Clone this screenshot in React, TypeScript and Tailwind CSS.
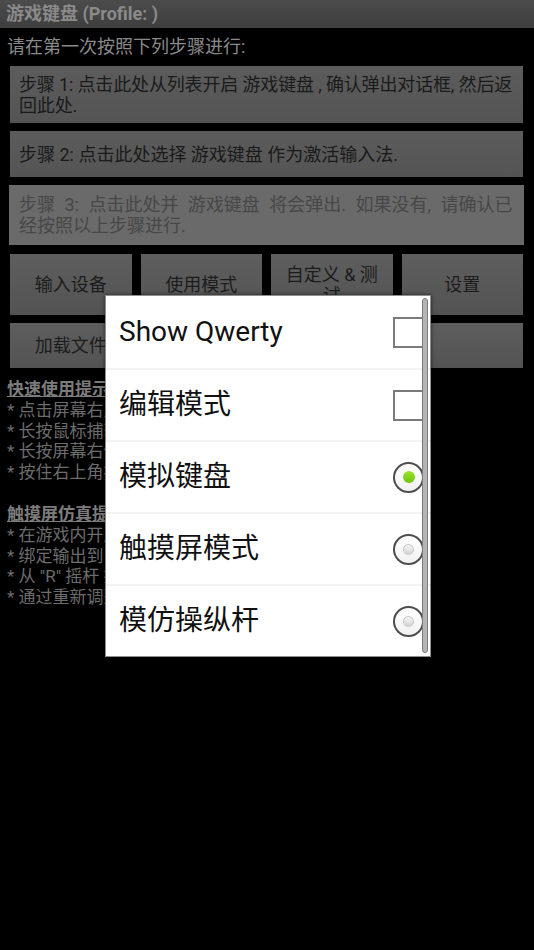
const steps = [
  {
    lines: ["步骤 1: 点击此处从列表开启 游戏键盘 , 确认弹出对话框, 然后返", "回此处."],
    h: "h-[57px]",
    extra: "tracking-[-0.15px]",
    disabled: false,
  },
  { lines: ["步骤 2: 点击此处选择 游戏键盘 作为激活输入法."], h: "h-[46px]", extra: "", disabled: false },
  {
    lines: ["步骤 3: 点击此处并 游戏键盘 将会弹出. 如果没有, 请确认已", "经按照以上步骤进行."],
    h: "h-[60px]",
    extra: "[word-spacing:5px]",
    disabled: true,
  },
];

const quickTips = [
  "* 点击屏幕右上角的图标切换模式",
  "* 长按鼠标捕获按钮锁定鼠标",
  "* 长按屏幕右侧打开菜单",
  "* 按住右上角按钮调整大小",
];

const touchTips = [
  "* 在游戏内开启触摸屏模式 (使用屏幕上显示的虚拟按键 )",
  "* 绑定输出到 \"L\" 摇杆",
  "* 从 \"R\" 摇杆 控制触摸",
  "* 通过重新调整大小改变区域",
];

type Choice = { label: string; kind: "check" | "radio"; on: boolean };

const choices: Choice[] = [
  { label: "Show Qwerty", kind: "check", on: false },
  { label: "编辑模式", kind: "check", on: false },
  { label: "模拟键盘", kind: "radio", on: true },
  { label: "触摸屏模式", kind: "radio", on: false },
  { label: "模仿操纵杆", kind: "radio", on: false },
];

function GrayButton({ children, className = "" }: { children: React.ReactNode; className?: string }) {
  return (
    <div
      className={`flex items-center justify-center bg-gradient-to-b from-[#5e5e5e] to-[#535353] px-[8px] text-center text-[18px] leading-[21px] text-[#1c1c1c] ${className}`}
    >
      {children}
    </div>
  );
}

function Mark({ c }: { c: Choice }) {
  if (c.kind === "check") {
    return <div className="h-[31px] w-[31px] border-2 border-[#7a7a7a] bg-white" />;
  }
  return (
    <div className="flex h-[31px] w-[31px] items-center justify-center rounded-full border-2 border-[#4d4d4d] bg-gradient-to-b from-white to-[#f1f1f1]">
      {c.on ? (
        <div className="h-[12px] w-[12px] rounded-full bg-gradient-to-b from-[#9be22a] to-[#6cc40a]" />
      ) : (
        <div className="h-[11px] w-[11px] rounded-full border border-[#c4c4c4] bg-gradient-to-b from-[#f4f4f4] to-[#d6d6d6]" />
      )}
    </div>
  );
}

export default function App() {
  return (
    <div className="relative min-h-[950px] bg-black font-['Roboto','Noto_Sans_CJK_SC',sans-serif]">
      {/* title bar */}
      <div className="h-[28px] bg-gradient-to-b from-[#4c4c4c] to-[#3e3e3e] px-[6px] text-[18px] font-bold leading-[28px] text-[#8a8a8a]">
        游戏键盘 (Profile: )
      </div>

      <div className="pt-[8px]">
        <p className="px-[7px] text-[18px] leading-[22px] text-[#8a8a8a]">请在第一次按照下列步骤进行:</p>

        <div className="mt-[8px] flex flex-col gap-[8px] pl-[10px] pr-[11px]">
          {steps.map((s) => (
            <div
              key={s.lines[0]}
              className={`flex flex-col justify-center overflow-hidden px-[9px] text-[18px] leading-[21px] ${s.h} ${s.extra} ${
                s.disabled
                  ? "-mx-[1px] bg-[#6a6a6a] px-[10px] text-[#474747]"
                  : "bg-gradient-to-b from-[#5c5c5c] to-[#545454] text-[#1a1a1a]"
              }`}
            >
              {s.lines.map((l) => (
                <span key={l} className="whitespace-nowrap">
                  {l}
                </span>
              ))}
            </div>
          ))}

          <div className="mt-[1px] grid grid-cols-4 gap-x-[9px] gap-y-[8px]">
            <GrayButton className="h-[61px]">输入设备</GrayButton>
            <GrayButton className="h-[61px]">使用模式</GrayButton>
            <GrayButton className="h-[61px]">自定义 &amp; 测试</GrayButton>
            <GrayButton className="h-[61px]">设置</GrayButton>
            <GrayButton className="h-[45px]">加载文件</GrayButton>
            <GrayButton className="col-span-3 h-[45px]">保存 / 关于</GrayButton>
          </div>
        </div>

        <div className="mt-[11px] px-[7px] text-[17px] leading-[20.8px] text-[#6c6c6c]">
          <p className="font-bold text-[#7c7c7c] underline">快速使用提示:</p>
          {quickTips.map((t) => (
            <p key={t}>{t}</p>
          ))}
          <p className="mt-[21px] font-bold text-[#7c7c7c] underline">触摸屏仿真提示:</p>
          {touchTips.map((t) => (
            <p key={t} className="whitespace-nowrap">
              {t}
            </p>
          ))}
        </div>
      </div>

      {/* mode popup */}
      <div className="absolute left-[105px] top-[295px] w-[326px] border border-[#8e8e8e] bg-white shadow-[0_0_4px_rgba(0,0,0,0.6)]">
        {choices.map((c, i) => (
          <div key={c.label}>
            {i > 0 && <div className="h-[2px] bg-[#f3f3f3]" />}
            <div className={`flex items-center justify-between pl-[13px] pr-[6px] ${i > 0 ? "h-[70px]" : "h-[72px]"}`}>
              <span className="text-[28px] leading-[32px] text-[#111]">{c.label}</span>
              <Mark c={c} />
            </div>
          </div>
        ))}
        <div className="absolute bottom-[3px] right-[2px] top-[2px] w-[6px] rounded-full border border-[#7c7c7c] bg-[#b4b4b4]" />
      </div>
    </div>
  );
}
